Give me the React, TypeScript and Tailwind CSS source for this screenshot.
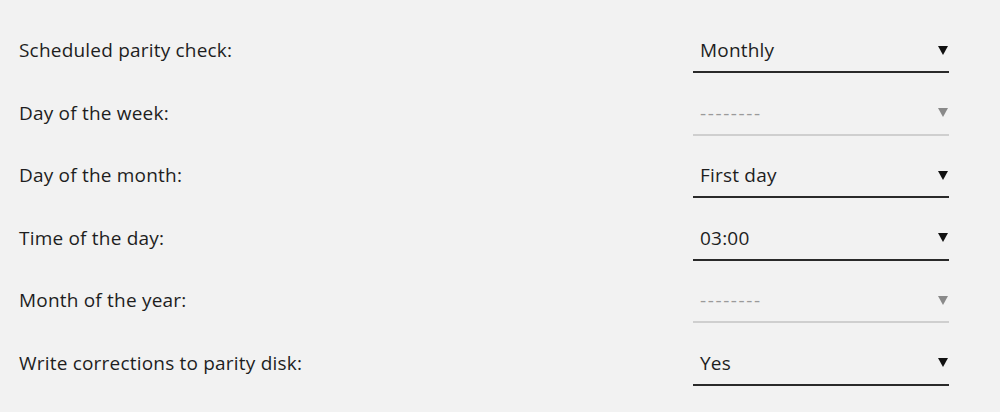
import React from "react";

type Row = { label: string; value: string; disabled?: boolean };

const rows: Row[] = [
  { label: "Scheduled parity check:", value: "Monthly" },
  { label: "Day of the week:", value: "--------", disabled: true },
  { label: "Day of the month:", value: "First day" },
  { label: "Time of the day:", value: "03:00" },
  { label: "Month of the year:", value: "--------", disabled: true },
  { label: "Write corrections to parity disk:", value: "Yes" },
];

function Caret({ disabled }: { disabled?: boolean }) {
  return (
    <svg width="10" height="9" viewBox="0 0 10 9" className="shrink-0">
      <path d="M0 0 H10 L5 9 Z" fill={disabled ? "#8a8a8a" : "#111111"} />
    </svg>
  );
}

export default function App() {
  return (
    <div
      className="w-[1000px] h-[412px] bg-[#f2f2f2] pt-[32px] overflow-hidden text-[#1e1e1e]"
      style={{ fontFamily: '"Open Sans", "Noto Sans", sans-serif' }}
    >
      {rows.map((r) => (
        <div key={r.label} className="h-[62.6px] flex items-start">
          <div className="pl-[19px] w-[693px] text-[19px] tracking-[0.2px] leading-[36px]">{r.label}</div>
          <div
            className={
              "w-[256px] flex items-center justify-between pl-[7px] pr-[1px] pb-[3px] border-b-2 " +
              (r.disabled ? "border-[#cfcfcf]" : "border-[#2a2a2a]")
            }
          >
            <span
              className={
                "text-[19px] leading-[36px] " +
                (r.disabled ? "text-[#9a9a9a] tracking-[1.6px]" : "text-[#1e1e1e] tracking-[0.2px]")
              }
            >
              {r.value}
            </span>
            <Caret disabled={r.disabled} />
          </div>
        </div>
      ))}
    </div>
  );
}
